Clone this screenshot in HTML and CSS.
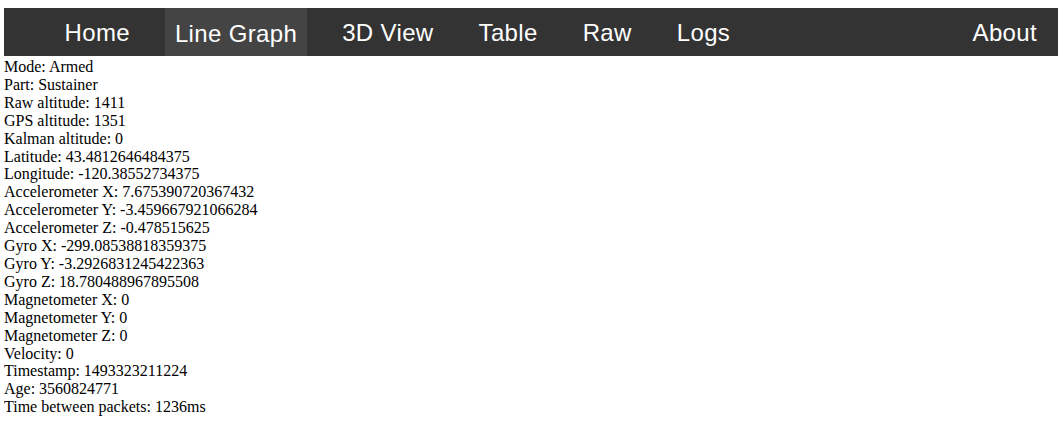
FILE: index.html
```html
<!DOCTYPE html>
<html>
<head>
<meta charset="utf-8">
<link rel="stylesheet" href="styles.css">
</head>
<body>
<nav class="nav">
  <ul class="nav-list">
    <li class="nav-item">Home</li>
    <li class="nav-item active">Line Graph</li>
    <li class="nav-item">3D View</li>
    <li class="nav-item">Table</li>
    <li class="nav-item">Raw</li>
    <li class="nav-item">Logs</li>
    <li class="nav-item nav-right">About</li>
  </ul>
</nav>
<div class="data">
  <div>Mode: Armed</div>
  <div>Part: Sustainer</div>
  <div>Raw altitude: 1411</div>
  <div>GPS altitude: 1351</div>
  <div>Kalman altitude: 0</div>
  <div>Latitude: 43.4812646484375</div>
  <div>Longitude: -120.38552734375</div>
  <div>Accelerometer X: 7.675390720367432</div>
  <div>Accelerometer Y: -3.459667921066284</div>
  <div>Accelerometer Z: -0.478515625</div>
  <div>Gyro X: -299.08538818359375</div>
  <div>Gyro Y: -3.2926831245422363</div>
  <div>Gyro Z: 18.780488967895508</div>
  <div>Magnetometer X: 0</div>
  <div>Magnetometer Y: 0</div>
  <div>Magnetometer Z: 0</div>
  <div>Velocity: 0</div>
  <div>Timestamp: 1493323211224</div>
  <div>Age: 3560824771</div>
  <div>Time between packets: 1236ms</div>
</div>
</body>
</html>
```
FILE: styles.css
```css
html, body {
  margin: 0;
  padding: 0;
  background: #fff;
}
body {
  padding: 8px 5px 0 4px;
  font-family: "Liberation Serif", "Times New Roman", serif;
  font-size: 16px;
  color: #000;
}
.nav {
  background: #333333;
  height: 48px;
}
.nav-list {
  list-style: none;
  margin: 0;
  padding: 0 0 0 38px;
  display: flex;
  height: 48px;
}
.nav-item {
  font-family: "Liberation Sans", Arial, sans-serif;
  font-size: 24px;
  letter-spacing: 0.35px;
  line-height: 50px;
  color: #ffffff;
  padding: 0 10px;
  margin: 0 12.5px;
}
.nav-item.active {
  background: #444444;
  line-height: 48px;
  padding-top: 2px;
  height: 46px;
}
.nav-right {
  margin-left: auto;
  margin-right: 11px;
}
.data {
  padding-top: 2px;
  line-height: 17.9px;
}
```
